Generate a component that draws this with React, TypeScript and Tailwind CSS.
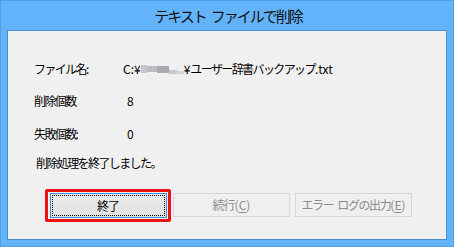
import React from "react";

const font = { fontFamily: '"Noto Sans CJK JP", "Noto Sans", sans-serif' };

function Row({ label, value, top }: { label: React.ReactNode; value: React.ReactNode; top?: string }) {
  return (
    <div className={`flex items-center h-[16px] ${top ?? ""}`}>
      <div className="w-[89px] shrink-0 tracking-[-1.6px]">{label}</div>
      <div className="tracking-[-1.6px]">{value}</div>
    </div>
  );
}

const N = ({ children }: { children: React.ReactNode }) => (
  <span className="tracking-normal">{children}</span>
);

export default function App() {
  return (
    <div
      className="w-[454px] h-[247px] bg-[#63b3fb] border border-[#4f9ee8] flex flex-col text-[12px] text-[#000] leading-none"
      style={font}
    >
      <div className="h-[29px] flex items-center justify-center text-[15px] tracking-[-2px] text-[#111] pl-[2px]">
        テキスト<span className="w-[5px]" />ファイルで削除
      </div>
      <div className="mx-[6px] h-[210px] bg-[#f0f0f0] border border-[#4a8fcf] flex flex-col pl-[26px]">
        <Row
          top="mt-[30px]"
          label={<>ファイル名<N>:</N></>}
          value={
            <span className="flex items-center">
              <N>C:¥</N>
              <span className="flex h-[10px] w-[43px] items-center">
                <span className="h-[8px] w-[6px] bg-[#c9c5cc]" />
                <span className="h-[6px] w-[10px] bg-[#bdbcc5]" />
                <span className="h-[7px] w-[12px] bg-[#a9aab1]" />
                <span className="h-[4px] w-[8px] bg-[#c8c7cc] self-end" />
                <span className="h-[3px] w-[7px] bg-[#d6d3d9] self-end" />
              </span>
              <span>
                <N>¥</N>ユーザー辞書バックアップ<N>.txt</N>
              </span>
            </span>
          }
        />
        <Row top="mt-[16px]" label="削除個数" value={<span className="pl-[4px]">8</span>} />
        <Row top="mt-[17px]" label={<>失敗個数<N>:</N></>} value={<span className="pl-[4px]">0</span>} />
        <div className="mt-[13px] h-[16px] flex items-center pl-[2px] tracking-[-1.6px]">
          削除処理を終了しました。
        </div>
        <div className="mt-[18px] flex items-start">
          <div className="ml-[11px] w-[126px] h-[33px] border-[3px] border-[#ee1111] rounded-[2px] flex items-center justify-center">
            <div className="w-[117px] h-[25px] border border-[#3c8fe0] bg-gradient-to-b from-[#ececec] to-[#e0e0e0] p-[1px]">
              <div className="w-full h-full border border-dotted border-black flex items-center justify-center tracking-[-1px]">
                終了
              </div>
            </div>
          </div>
          <div className="ml-[2px] mt-[4px] w-[117px] h-[24px] border border-[#d6d6d6] bg-[#efefef] text-[#8c8c8c] flex items-center justify-center tracking-[-1px]">
            続行<N>(<span className="underline underline-offset-2">C</span>)</N>
          </div>
          <div className="ml-[5px] mt-[4px] w-[117px] h-[24px] border border-[#d6d6d6] bg-[#efefef] text-[#8c8c8c] flex items-center justify-center tracking-[-1.4px]">
            エラー<span className="w-[4px]" />ログの出力<N>(<span className="underline underline-offset-2">E</span>)</N>
          </div>
        </div>
      </div>
    </div>
  );
}
